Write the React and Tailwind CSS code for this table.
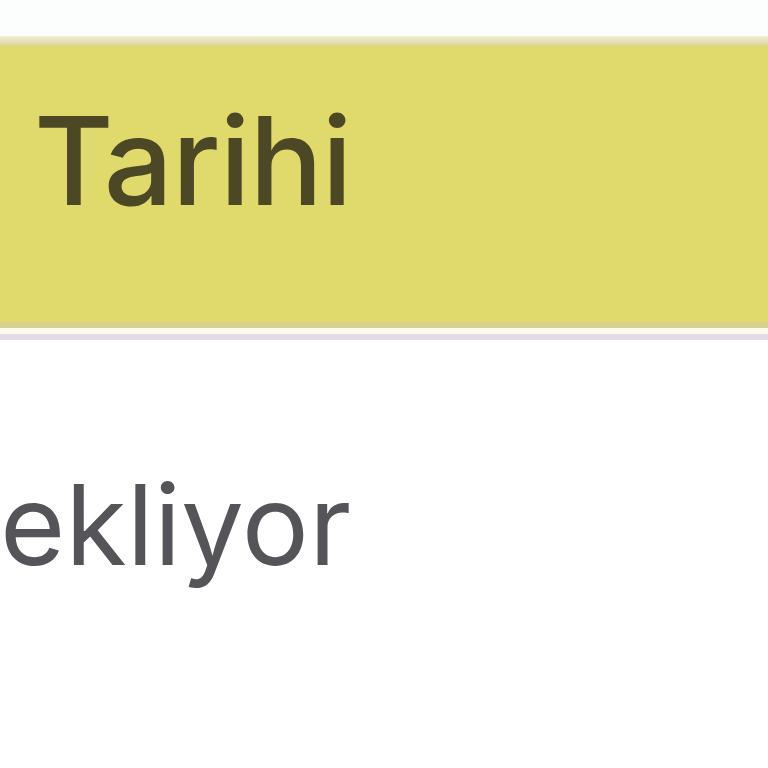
export default function App() {
  return (
    <div className="w-[768px] h-[768px] overflow-hidden bg-white flex flex-col" style={{ fontFamily: 'Inter, "Noto Sans", sans-serif' }}>
      <div className="h-[36px] bg-[#fcfdfd]"></div>
      <div className="h-[10px] bg-gradient-to-b from-[#f3efd9] to-[#dcd594]"></div>
      <div className="h-[276px] bg-[#e0da6c] flex items-center pl-[34px] pb-[46px]">
        <span className="text-[122px] leading-none font-medium text-[#4c4825] tracking-[-1px]">Tarihi</span>
      </div>
      <div className="h-[6px] bg-[#d6d18e]"></div>
      <div className="h-[6px] bg-[#fdfbec]"></div>
      <div className="h-[6px] bg-[#e2dbe6]"></div>
      <div className="flex-1 bg-white pt-[128px]">
        <div className="whitespace-nowrap text-[112px] leading-none text-[#555458]">ekliyor</div>
      </div>
    </div>
  );
}
